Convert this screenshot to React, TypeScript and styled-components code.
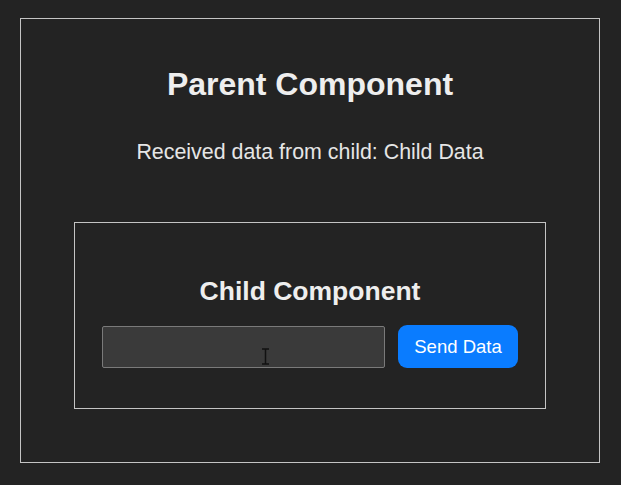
import React from "react";
import styled, { createGlobalStyle } from "styled-components";

const Global = createGlobalStyle`
  html, body { margin: 0; padding: 0; background: #232323; }
  body { font-family: "Liberation Sans", Arial, sans-serif; color: #ececec; }
`;

const Page = styled.div`
  padding: 18px 22px 22px 20px;
`;

const ParentBox = styled.div`
  border: 1px solid #c4c4c4;
  width: 578px;
  padding: 47px 0 53px;
  display: flex;
  flex-direction: column;
  align-items: center;
`;

const Title = styled.h1<{ $size: number }>`
  margin: 0;
  font-size: ${(p) => p.$size}px;
  line-height: 1.15;
  font-weight: 700;
  color: #eeeeee;
`;

const Received = styled.p`
  margin: 37px 0 58px;
  font-size: 21.4px;
  line-height: 24px;
  color: #e6e6e6;
`;

const ChildBox = styled.div`
  border: 1px solid #c4c4c4;
  width: 470px;
  padding: 53px 0 40px;
  display: flex;
  flex-direction: column;
  align-items: center;
  gap: 19px;
`;

const Row = styled.div`
  display: flex;
  gap: 13px;
  align-items: center;
`;

const InputWrap = styled.div`
  position: relative;
`;

const Input = styled.input`
  box-sizing: border-box;
  width: 283px;
  height: 42px;
  background: #3a3a3a;
  border: 1px solid #7a7a7a;
  border-radius: 2px;
  outline: none;
  color: #eee;
  font-size: 18px;
  padding: 0 8px;
  font-family: inherit;
  display: block;
`;

const Cursor = styled.svg`
  position: absolute;
  left: 159px;
  top: 22px;
  pointer-events: none;
`;

const Button = styled.button`
  box-sizing: border-box;
  width: 120px;
  height: 43px;
  background: #0a7cff;
  border: none;
  border-radius: 9px;
  color: #ffffff;
  font-family: inherit;
  font-size: 18.5px;
  cursor: pointer;
`;

export default function App() {
  return (
    <>
      <Global />
      <Page>
        <ParentBox>
          <Title $size={32}>Parent Component</Title>
          <Received>Received data from child: Child Data</Received>
          <ChildBox>
            <Title $size={26.5}>Child Component</Title>
            <Row>
              <InputWrap>
                <Input type="text" />
                <Cursor width="9" height="17" viewBox="0 0 9 17">
                  <path d="M1 1h7M4.5 1v15M1 16h7" stroke="#111" strokeWidth="1.5" fill="none" />
                </Cursor>
              </InputWrap>
              <Button>Send Data</Button>
            </Row>
          </ChildBox>
        </ParentBox>
      </Page>
    </>
  );
}
